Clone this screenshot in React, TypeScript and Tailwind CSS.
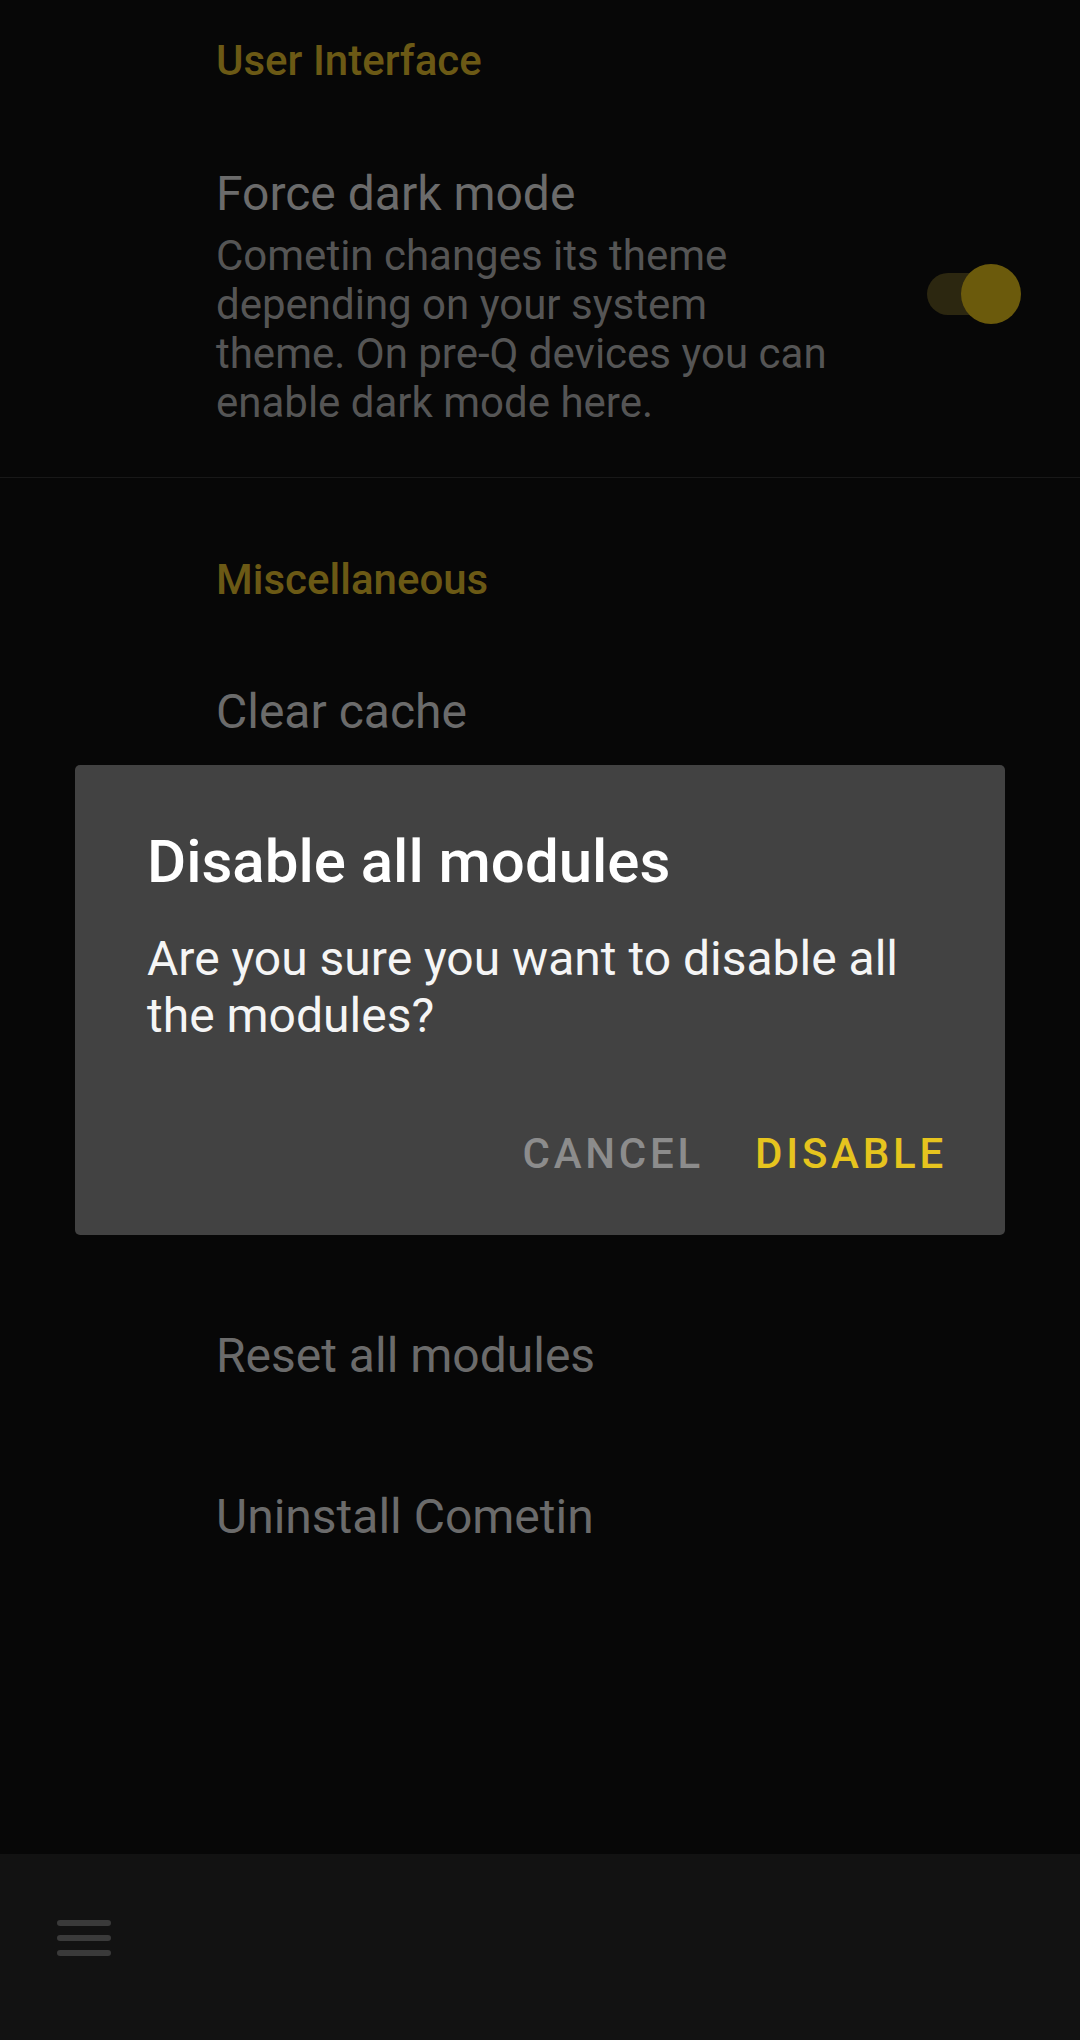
import React from "react";

const font = "font-['Roboto','Noto_Sans',sans-serif]";

function ItemRow({ title }: { title?: string }) {
  return (
    <div className="h-[161px] flex items-center pl-[216px]">
      {title ? <div className="text-[48px] leading-[56px] text-[#6b6b6b]">{title}</div> : null}
    </div>
  );
}

export default function App() {
  return (
    <div className={`${font} relative w-[1080px] h-[2040px] overflow-hidden bg-[#070707] flex flex-col`}>
      <div className="flex-1 flex flex-col">
        {/* Category: User Interface */}
        <div className="pl-[216px] pt-[36px] text-[42px] leading-[49px] font-medium text-[#6b5915]">
          User Interface
        </div>

        {/* Force dark mode row */}
        <div className="flex items-center pt-[81px] pb-[50px] border-b border-[#181818]">
          <div className="flex-1 pl-[216px]">
            <div className="text-[48px] leading-[56px] text-[#6b6b6b]">Force dark mode</div>
            <div className="mt-[9px] text-[42px] leading-[49px] text-[#555555]">
              <span className="block whitespace-nowrap">Cometin changes its theme</span>
              <span className="block whitespace-nowrap">depending on your system</span>
              <span className="block whitespace-nowrap">theme. On pre-Q devices you can</span>
              <span className="block whitespace-nowrap">enable dark mode here.</span>
            </div>
          </div>
          <div className="relative w-[94px] h-[60px] mr-[59px] mb-[6px] shrink-0">
            <div className="absolute left-0 top-[9px] w-[80px] h-[42px] rounded-full bg-[#2c2710]" />
            <div className="absolute right-0 top-0 w-[60px] h-[60px] rounded-full bg-[#6b5a0c]" />
          </div>
        </div>

        {/* Category: Miscellaneous */}
        <div className="pl-[216px] pt-[77px] text-[42px] leading-[49px] font-medium text-[#6b5915]">
          Miscellaneous
        </div>

        <div className="mt-[27px] flex flex-col">
          <ItemRow title="Clear cache" />
          <ItemRow />
          <ItemRow />
          <ItemRow />
          <ItemRow title="Reset all modules" />
          <ItemRow title="Uninstall Cometin" />
        </div>
      </div>

      {/* Bottom bar */}
      <div className="h-[186px] bg-[#121212] shrink-0 pl-[57px] pt-[66px] flex flex-col gap-[9px]">
        <div className="w-[54px] h-[6px] rounded-full bg-[#3a3a3a]" />
        <div className="w-[54px] h-[6px] rounded-full bg-[#3a3a3a]" />
        <div className="w-[54px] h-[6px] rounded-full bg-[#3a3a3a]" />
      </div>

      {/* Dialog */}
      <div className="absolute left-[75px] top-[765px] w-[930px] h-[470px] rounded-[5px] bg-[#424242] flex flex-col">
        <div className="pl-[72px] pt-[62px] text-[60px] leading-[70px] font-medium text-white">
          Disable all modules
        </div>
        <div className="pl-[72px] pr-[60px] mt-[33px] text-[48px] leading-[57px] text-[#f5f5f5]">
          <span className="block whitespace-nowrap">Are you sure you want to disable all</span>
          <span className="block whitespace-nowrap">the modules?</span>
        </div>
        <div className="mt-[85px] flex justify-end pr-[58px] gap-[51px] text-[42px] leading-[49px] font-medium tracking-[0.09em]">
          <span className="text-[#8c8c8c]">CANCEL</span>
          <span className="text-[#e6c41e]">DISABLE</span>
        </div>
      </div>
    </div>
  );
}
